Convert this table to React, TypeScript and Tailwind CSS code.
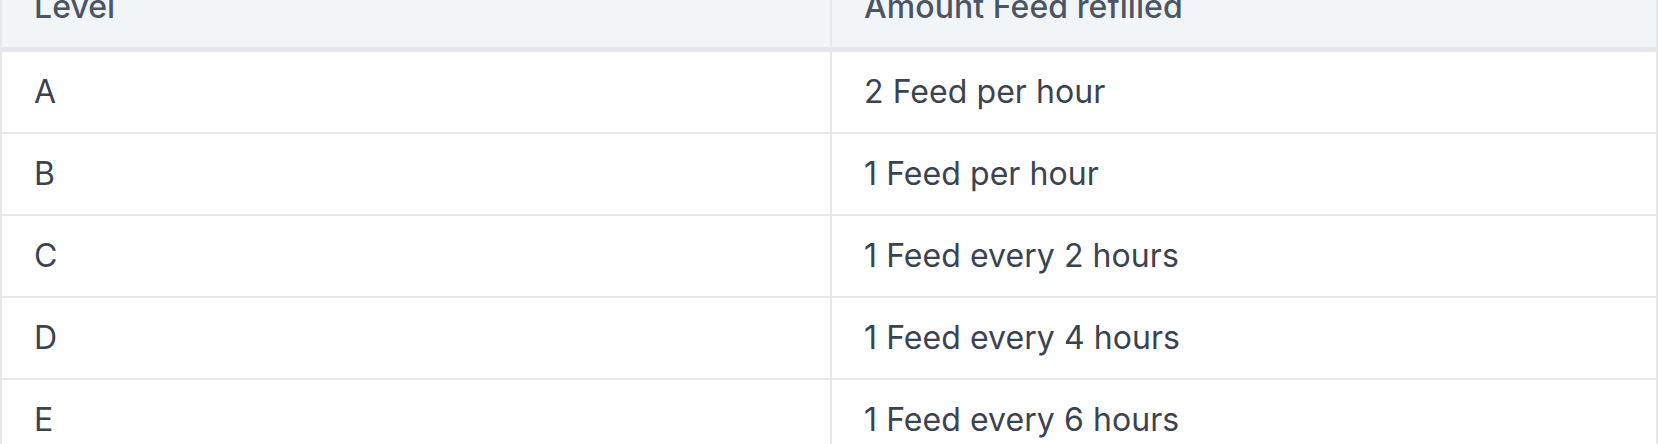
const rows = [
  { level: "A", amount: "2 Feed per hour" },
  { level: "B", amount: "1 Feed per hour" },
  { level: "C", amount: "1 Feed every 2 hours" },
  { level: "D", amount: "1 Feed every 4 hours" },
  { level: "E", amount: "1 Feed every 6 hours" },
];

export default function App() {
  return (
    <div className="w-[1660px] h-[444px] overflow-hidden bg-white font-['Inter','Liberation_Sans',sans-serif] tracking-[0.004em]">
      <div className="-mt-[33px] w-[1658px] border-x-2 border-[#e5e7eb]">
        {/* header */}
        <div className="grid grid-cols-[830px_1fr] bg-[#f2f5f8] border-b-[5px] border-[#e5e7eb] text-[32px] leading-[48px] font-medium text-[#4b5563]">
          <div className="px-8 py-4 border-r-2 border-[#e5e7eb]">Level</div>
          <div className="px-8 py-4">Amount Feed refilled</div>
        </div>
        {rows.map((r) => (
          <div
            key={r.level}
            className="grid grid-cols-[830px_1fr] border-b-2 border-[#e5e7eb] text-[32px] leading-[48px] text-[#3b4350]"
          >
            <div className="px-8 py-4 border-r-2 border-[#e5e7eb]">{r.level}</div>
            <div className="px-8 py-4">{r.amount}</div>
          </div>
        ))}
      </div>
    </div>
  );
}
